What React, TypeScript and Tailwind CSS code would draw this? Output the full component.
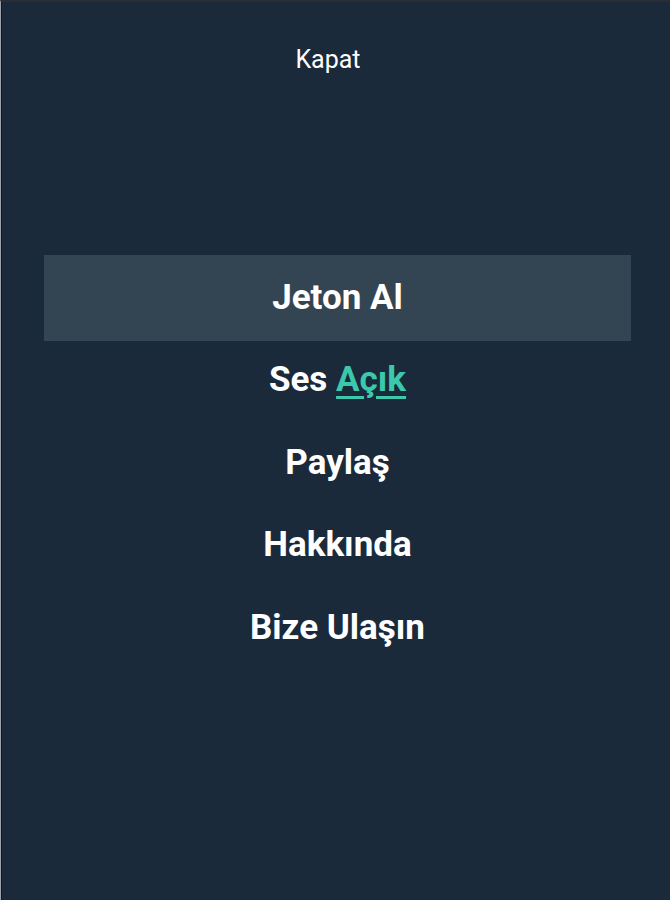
const items = ["Paylaş", "Hakkında", "Bize Ulaşın"];

export default function App() {
  return (
    <div
      className="h-[900px] w-[670px] border-l border-l-[#9ea2a8] border-t-2 border-t-[#2a2e33] bg-[#1a2a3a] text-white"
      style={{ fontFamily: "Roboto, 'Noto Sans', sans-serif" }}
    >
      <div className="h-full border-l border-l-[#14181d]">
        {/* Close */}
        <div className="flex h-[116px] justify-center pr-[16px] pt-[42px]">
          <span className="text-[25px] leading-[32px]">Kapat</span>
        </div>

        {/* Menu */}
        <div className="ml-[42px] mt-[137px] w-[587px]">
          <div className="flex h-[86px] items-center justify-center bg-[#334553] text-[35px] font-bold">
            Jeton Al
          </div>
          <div className="flex h-[82px] items-center justify-center pb-[3px] text-[35px] font-bold">
            Ses&nbsp;
            <span className="text-[#3cc8ad] underline decoration-[3px] underline-offset-[5px]">
              Açık
            </span>
          </div>
          {items.map((label) => (
            <div
              key={label}
              className="flex h-[82.5px] items-center justify-center pb-[3px] text-[35px] font-bold"
            >
              {label}
            </div>
          ))}
        </div>
      </div>
    </div>
  );
}
